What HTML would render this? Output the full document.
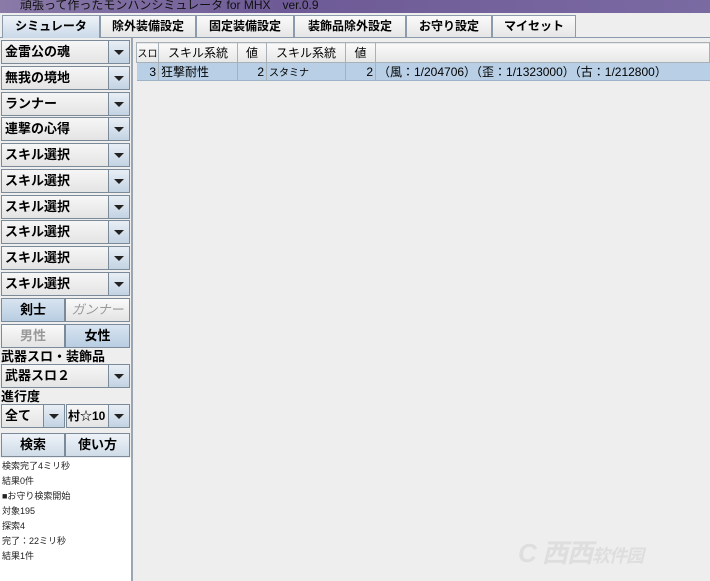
<!DOCTYPE html><html><head><meta charset="utf-8"><style>
*{box-sizing:border-box;margin:0;padding:0}
body{width:710px;height:581px;background:#eeeeee;position:relative;overflow:hidden;font-family:"Liberation Sans","Noto Sans CJK JP",sans-serif;font-size:12px;color:#000}
.a{position:absolute}
.title{left:0;top:0;width:710px;height:13px;background:linear-gradient(90deg,#8a7aa8,#6d5a96 40%,#7a6aa2);color:#111;font-size:12px;line-height:10px;padding-left:20px;overflow:hidden}
.tab{top:15px;height:22px;border:1px solid #8c9bab;border-bottom:none;background:linear-gradient(#fafafa,#e6e6e6);font-weight:bold;font-size:12px;line-height:20px;text-align:center}
.combo{left:1px;width:129px;height:24px;border:1px solid #7a8a99;background:linear-gradient(#f6f6f6,#e4e4e4);font-weight:bold;font-size:13px;line-height:22px;padding-left:3px;white-space:nowrap;overflow:hidden}
.combo:after{content:"";position:absolute;right:0;top:0;width:20px;height:22px;border-left:1px solid #7a8a99;background:linear-gradient(#e8eef5,#c3d3e3)}
.combo i{position:absolute;right:5px;top:9px;width:0;height:0;border-left:5px solid transparent;border-right:5px solid transparent;border-top:5px solid #222;z-index:2}
.btn{height:24px;border:1px solid #7a8a99;font-weight:bold;font-size:13px;line-height:22px;text-align:center}
.sel{background:linear-gradient(#d8e4f0,#b8cde2)}
.un{background:linear-gradient(#fafafa,#e4e4e4);color:#999}
.lbl{left:1px;font-weight:bold;font-size:13px;line-height:13px}
.log{left:0;top:458px;width:131px;height:123px;background:#fff;font-size:9px;line-height:15px;padding:1px 2px;color:#222}
table{table-layout:fixed}
td{border-right:1px solid #a8b0b8;padding:0 2px;white-space:nowrap;overflow:hidden}
</style></head><body>
<div class="a title">頑張って作ったモンハンシミュレータ for MHX　ver.0.9</div>
<div class="a" style="left:0;top:37px;width:710px;height:1px;background:#8c9bab"></div>
<div class="a tab" style="left:2px;width:98px;background:linear-gradient(#eef3f8,#c9d8e8);height:23px">シミュレータ</div>
<div class="a tab" style="left:100px;width:96px">除外装備設定</div>
<div class="a tab" style="left:196px;width:98px">固定装備設定</div>
<div class="a tab" style="left:294px;width:112px">装飾品除外設定</div>
<div class="a tab" style="left:406px;width:86px">お守り設定</div>
<div class="a tab" style="left:492px;width:84px">マイセット</div>

<div class="a" style="left:131px;top:38px;width:2px;height:543px;background:#9aa6b2"></div>

<div class="a combo" style="top:40px"><i></i>金雷公の魂</div>
<div class="a combo" style="top:66px"><i></i>無我の境地</div>
<div class="a combo" style="top:92px"><i></i>ランナー</div>
<div class="a combo" style="top:117px"><i></i>連撃の心得</div>
<div class="a combo" style="top:143px"><i></i>スキル選択</div>
<div class="a combo" style="top:169px"><i></i>スキル選択</div>
<div class="a combo" style="top:195px"><i></i>スキル選択</div>
<div class="a combo" style="top:220px"><i></i>スキル選択</div>
<div class="a combo" style="top:246px"><i></i>スキル選択</div>
<div class="a combo" style="top:272px"><i></i>スキル選択</div>

<div class="a btn sel" style="left:1px;top:298px;width:64px">剣士</div>
<div class="a btn un" style="left:65px;top:298px;width:65px;font-weight:normal;font-style:italic">ガンナー</div>
<div class="a btn un" style="left:1px;top:324px;width:64px">男性</div>
<div class="a btn sel" style="left:65px;top:324px;width:65px">女性</div>
<div class="a lbl" style="top:350px">武器スロ・装飾品</div>
<div class="a combo" style="top:364px"><i></i>武器スロ２</div>
<div class="a lbl" style="top:390px">進行度</div>
<div class="a combo" style="top:404px;width:64px"><i></i>全て</div>
<div class="a combo" style="top:404px;left:66px;width:64px;font-size:12px;padding-left:1px"><i></i>村☆10</div>
<div class="a btn" style="left:1px;top:433px;width:64px;background:linear-gradient(#eef3f8,#cfdbe8)">検索</div>
<div class="a btn" style="left:65px;top:433px;width:65px;background:linear-gradient(#eef3f8,#cfdbe8)">使い方</div>
<div class="a log">検索完了4ミリ秒<br>結果0件<br>■お守り検索開始<br>対象195<br>探索4<br>完了：22ミリ秒<br>結果1件</div>

<table class="a" style="left:136px;top:42px;width:574px;border-collapse:collapse;font-size:12px">
<colgroup><col style="width:22px"><col style="width:79px"><col style="width:29px"><col style="width:79px"><col style="width:30px"><col></colgroup>
<tr style="height:20px;background:linear-gradient(#fafafa,#e8e8e8);text-align:center;border-top:1px solid #a8b0b8;border-bottom:1px solid #a8b0b8;border-left:1px solid #a8b0b8">
<td style="font-size:10px;padding:0">スロ</td><td>スキル系統</td><td>値</td><td>スキル系統</td><td>値</td><td></td></tr>
<tr style="height:17px;background:#b8cfe5;border-bottom:1px solid #9fb3c8">
<td style="text-align:right">3</td><td>狂撃耐性</td><td style="text-align:right">2</td><td style="font-size:10px">スタミナ</td><td style="text-align:right">2</td><td style="border:none">（風：1/204706）（歪：1/1323000）（古：1/212800）</td></tr>
</table>
<div class="a" style="left:518px;top:533px;font-size:26px;font-weight:bold;font-style:italic;color:#dedede;letter-spacing:-1px">C 西西<span style="font-size:18px">软件园</span></div>
</body></html>
